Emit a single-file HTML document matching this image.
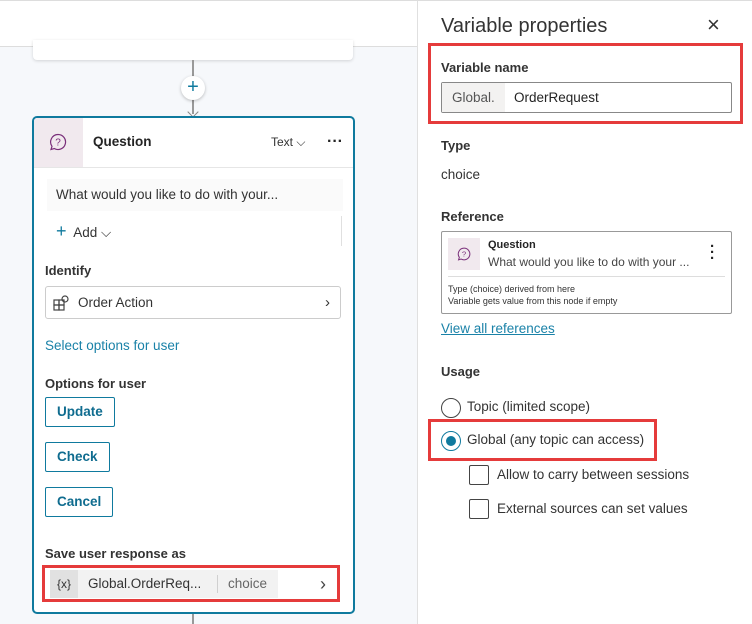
<!DOCTYPE html>
<html><head><meta charset="utf-8"><style>
*{box-sizing:border-box;margin:0;padding:0}
body{width:752px;height:624px;overflow:hidden;position:relative;font-family:"Liberation Sans",sans-serif;color:#242424;background:#f6f8fb;font-size:13.5px}
.a{position:absolute}
.btn{position:absolute;left:45px;height:30px;border:1px solid #0f7a9e;border-radius:2px;color:#0f6c8f;font-weight:bold;font-size:13.5px;line-height:28px;padding:0 11px;background:#fff}
.lbl{position:absolute;font-weight:bold;font-size:13px;color:#333}
</style></head><body>
<div class="a" style="left:0;top:0;width:417px;height:47px;background:#fff;border-top:1px solid #ddd;border-bottom:1px solid #ddd"></div>
<div class="a" style="left:33px;top:40px;width:320px;height:20px;background:#fff;border-radius:0 0 4px 4px;box-shadow:0 1px 3px rgba(0,0,0,.15)"></div>
<div class="a" style="left:192px;top:60px;width:2px;height:54px;background:#999"></div>
<div class="a" style="left:189px;top:108px;width:8px;height:8px;border-right:1.5px solid #888;border-bottom:1.5px solid #888;transform:rotate(45deg)"></div>
<div class="a" style="left:181px;top:76px;width:24px;height:24px;border-radius:50%;background:#fff;box-shadow:0 1px 3px rgba(0,0,0,.25);color:#0f7a9e;text-align:center;font-size:20px;line-height:23px">+</div>
<div class="a" style="left:192px;top:612px;width:2px;height:12px;background:#999"></div>
<!-- card -->
<div class="a" style="left:32px;top:116px;width:323px;height:498px;background:#fff;border:2px solid #0f7a9e;border-radius:5px;overflow:hidden">
 <div class="a" style="left:0;top:0;width:49px;height:49px;background:#f1e9ee"></div>
 <svg class="a" style="left:15px;top:15px" width="18" height="18" viewBox="0 0 18 18"><path d="M9 1.5a7.5 7.5 0 1 1-3.7 14L2 16.5l1-3.2A7.5 7.5 0 0 1 9 1.5z" fill="none" stroke="#7a2f7a" stroke-width="1.2"/><text x="9" y="12.5" font-size="10" text-anchor="middle" fill="#7a2f7a" font-family="Liberation Sans">?</text></svg>
 <div class="a" style="left:59px;top:16px;font-weight:bold;font-size:13.5px">Question</div>
 <div class="a" style="left:237px;top:17px;font-size:12px;color:#333">Text ⌵</div>
 <div class="a" style="left:293px;top:15px;font-size:16px;font-weight:bold">···</div>
 <div class="a" style="left:0;top:49px;width:100%;height:1px;background:#e6e6e6"></div>
 <div class="a" style="left:13px;top:61px;width:296px;height:32px;background:#fafafa;font-size:13.5px;line-height:32px;padding-left:9px;color:#333">What would you like to do with your...</div>
 <div class="a" style="left:307px;top:98px;width:1px;height:30px;background:#e0e0e0"></div>
 <div class="a" style="left:22px;top:103px;font-size:13.5px;color:#333"><span style="color:#0f7a9e;font-size:18px">+</span>&nbsp; Add ⌵</div>
 <div class="lbl" style="left:11px;top:145px">Identify</div>
 <div class="a" style="left:11px;top:168px;width:296px;height:33px;border:1px solid #ccc;border-radius:3px;line-height:31px;padding-left:32px;font-size:13.5px;color:#333">Order Action<span style="position:absolute;right:10px;font-size:15px">›</span>
  <svg class="a" style="left:7px;top:8px" width="16" height="16" viewBox="0 0 16 16" fill="none" stroke="#444" stroke-width="1.2"><rect x="1" y="5" width="5" height="5"/><rect x="1" y="10" width="5" height="5"/><rect x="6" y="10" width="5" height="5"/><rect x="6" y="5" width="5" height="5"/><circle cx="12" cy="4" r="3"/></svg></div>
 <div class="a" style="left:11px;top:220px;color:#1a82a8;font-size:13.5px">Select options for user</div>
 <div class="lbl" style="left:11px;top:258px">Options for user</div>
</div>
<div class="btn" style="top:397px">Update</div>
<div class="btn" style="top:442px">Check</div>
<div class="btn" style="top:487px">Cancel</div>
<div class="lbl" style="left:45px;top:546px">Save user response as</div>
<div class="a" style="left:50px;top:570px;width:228px;height:28px;background:#f2f2f2;font-size:13.5px;line-height:28px;color:#333">
 <span class="a" style="left:0;width:28px;height:28px;background:#e1e1e1;text-align:center;font-size:12px">{x}</span>
 <span class="a" style="left:38px">Global.OrderReq...</span>
 <span class="a" style="left:167px;top:5px;width:1px;height:18px;background:#d0d0d0"></span>
 <span class="a" style="left:178px;color:#666">choice</span></div>
<div class="a" style="left:320px;top:574px;font-size:18px;color:#444">›</div>
<div class="a" style="left:42px;top:565px;width:298px;height:37px;border:3px solid #e53b3b"></div>
<!-- panel -->
<div class="a" style="left:417px;top:0;width:335px;height:624px;background:#fff;border-left:1px solid #e0e0e0;border-top:1px solid #ddd"></div>
<div class="a" style="left:441px;top:15px;font-size:20px;color:#333">Variable properties</div>
<div class="a" style="left:707px;top:12px;font-size:22px;color:#333">×</div>
<div class="a" style="left:428px;top:43px;width:315px;height:81px;border:3px solid #e53b3b"></div>
<div class="lbl" style="left:441px;top:60px">Variable name</div>
<div class="a" style="left:441px;top:82px;width:291px;height:31px;border:1px solid #888;border-radius:2px;background:#fff;font-size:13.5px;line-height:29px">
 <span class="a" style="left:0;width:63px;height:29px;background:#f3f2f1;padding-left:10px;color:#555">Global.</span>
 <span class="a" style="left:72px">OrderRequest</span></div>
<div class="lbl" style="left:441px;top:138px">Type</div>
<div class="a" style="left:441px;top:167px;font-size:13.5px;color:#333">choice</div>
<div class="lbl" style="left:441px;top:209px">Reference</div>
<div class="a" style="left:441px;top:231px;width:291px;height:83px;border:1px solid #999;border-radius:2px;background:#fff">
 <div class="a" style="left:6px;top:6px;width:32px;height:32px;background:#f1e9ee"></div>
 <svg class="a" style="left:15px;top:15px" width="14" height="14" viewBox="0 0 18 18"><path d="M9 1.5a7.5 7.5 0 1 1-3.7 14L2 16.5l1-3.2A7.5 7.5 0 0 1 9 1.5z" fill="none" stroke="#7a2f7a" stroke-width="1.3"/><text x="9" y="12.5" font-size="10" text-anchor="middle" fill="#7a2f7a" font-family="Liberation Sans">?</text></svg>
 <div class="a" style="left:46px;top:7px;font-size:11px;font-weight:bold">Question</div>
 <div class="a" style="left:46px;top:23px;font-size:12px;color:#444">What would you like to do with your ...</div>
 <div class="a" style="left:268px;top:12px;font-size:15px;font-weight:bold;line-height:6px">·<br>·<br>·</div>
 <div class="a" style="left:6px;top:44px;width:277px;height:1px;background:#ddd"></div>
 <div class="a" style="left:6px;top:51px;font-size:9px;line-height:12px;color:#333">Type (choice) derived from here<br>Variable gets value from this node if empty</div>
</div>
<div class="a" style="left:441px;top:321px;font-size:13.5px;color:#1a82a8;text-decoration:underline">View all references</div>
<div class="lbl" style="left:441px;top:364px">Usage</div>
<div class="a" style="left:441px;top:398px;width:20px;height:20px;border:1.5px solid #444;border-radius:50%"></div>
<div class="a" style="left:467px;top:399px;font-size:13.5px;color:#333">Topic (limited scope)</div>
<div class="a" style="left:428px;top:419px;width:229px;height:42px;border:3px solid #e53b3b"></div>
<div class="a" style="left:441px;top:431px;width:20px;height:20px;border:1.5px solid #0f7a9e;border-radius:50%"><div class="a" style="left:3.5px;top:3.5px;width:10px;height:10px;border-radius:50%;background:#0f7a9e"></div></div>
<div class="a" style="left:467px;top:432px;font-size:13.5px;color:#333">Global (any topic can access)</div>
<div class="a" style="left:469px;top:465px;width:20px;height:20px;border:1.5px solid #444;border-radius:2px"></div>
<div class="a" style="left:497px;top:467px;font-size:13.5px;color:#333">Allow to carry between sessions</div>
<div class="a" style="left:469px;top:499px;width:20px;height:20px;border:1.5px solid #444;border-radius:2px"></div>
<div class="a" style="left:497px;top:501px;font-size:13.5px;color:#333">External sources can set values</div>
</body></html>
